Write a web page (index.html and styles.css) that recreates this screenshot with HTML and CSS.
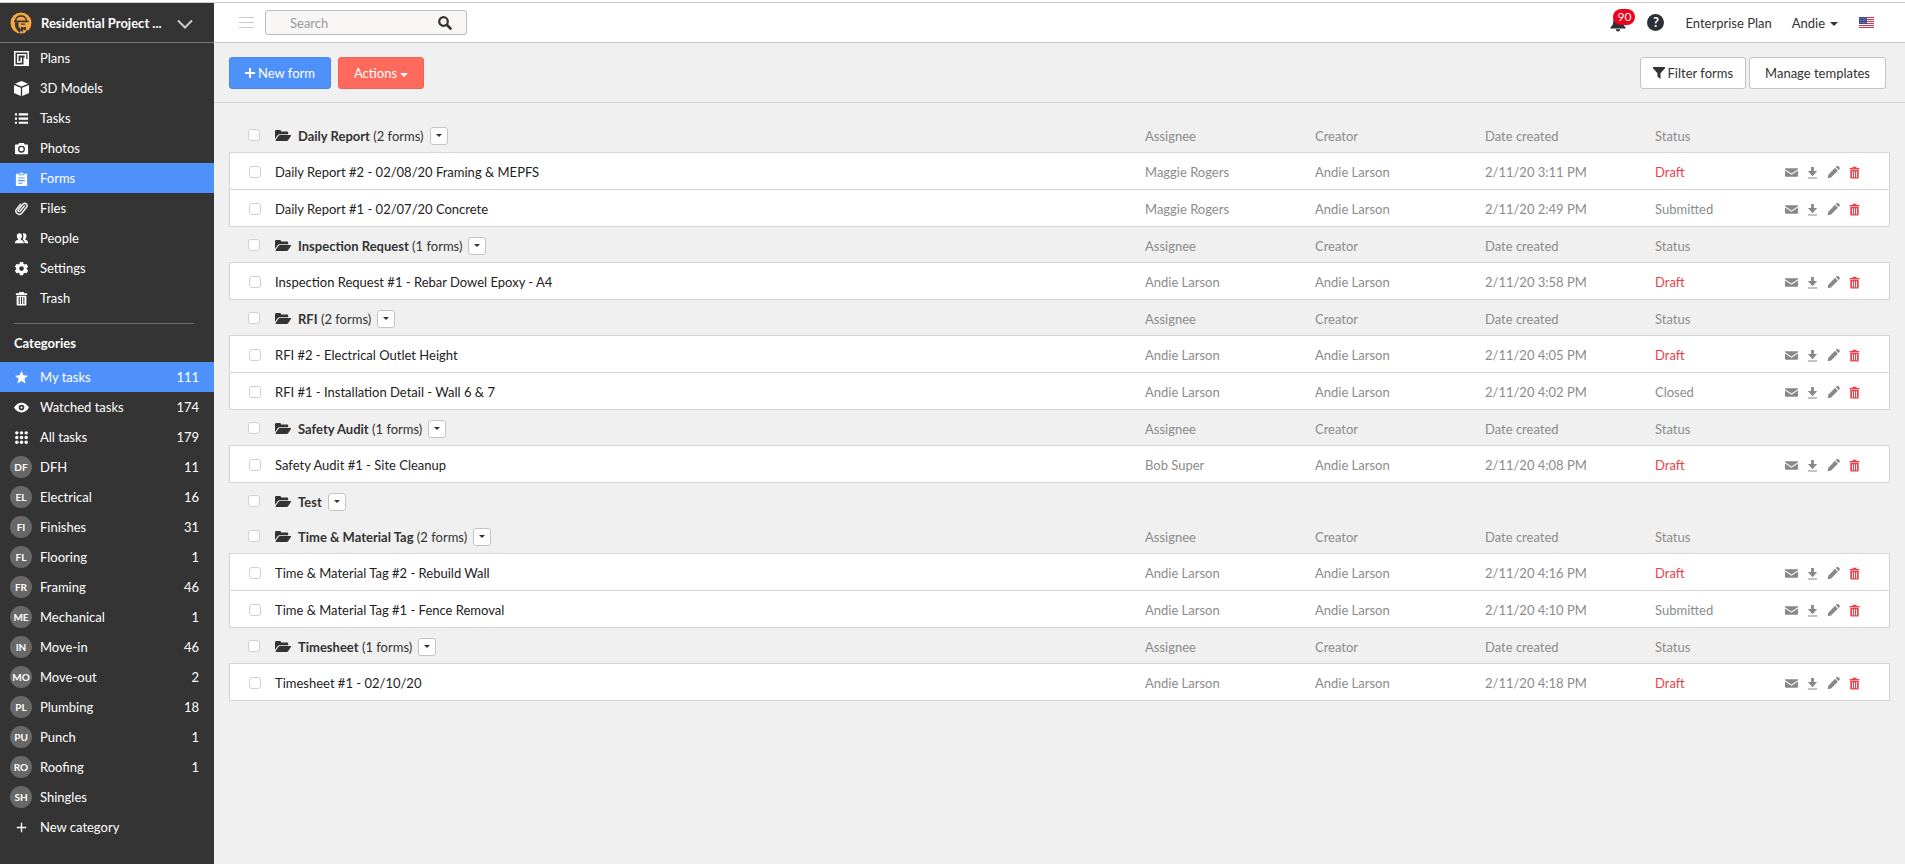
FILE: index.html
```html
<!DOCTYPE html>
<html lang="en">
<head>
    <meta charset="UTF-8">
    <meta name="viewport" content="width=device-width, initial-scale=1.0">
    <title>Forms - Residential Project</title>
    <link rel="stylesheet" href="styles.css">
</head>
<body>
    <!-- icon sprite -->
    <svg class="sprite" aria-hidden="true">
        <symbol id="i-plans" viewBox="0 0 15 15"><path fill="none" stroke="currentColor" stroke-width="1.500" d="M.75.75h13.500v13.500H.75z"/><path fill="none" stroke="currentColor" stroke-width="1.500" d="M3.800 12V3.800h7.700v3.400M3.800 11h3.400V6.500"/><path d="M9.500 6.500H12V8h2v6.500H9.500z"/></symbol>
        <symbol id="i-cube" viewBox="0 0 16 16"><path d="M8 0l7 2.800L8 5.800 1 2.800zM0 4.200l7.300 3.100V16L0 12.800zM16 4.200L8.700 7.300V16l7.300-3.200z"/></symbol>
        <symbol id="i-list" viewBox="0 0 16 16"><path d="M1 2.500h2.200v2.200H1zM5 2.500h10v2.200H5zM1 7h2.200v2.200H1zM5 7h10v2.200H5zM1 11.500h2.200v2.200H1zM5 11.500h10v2.200H5z"/></symbol>
        <symbol id="i-camera" viewBox="0 0 16 16"><path fill-rule="evenodd" d="M5.500 2h5l1 1.700H14a1 1 0 0 1 1 1V13a1 1 0 0 1-1 1H2a1 1 0 0 1-1-1V4.700a1 1 0 0 1 1-1h2.500zM8 5a3.700 3.700 0 1 0 0 7.400A3.700 3.700 0 0 0 8 5zm0 1.400a2.300 2.300 0 1 1 0 4.600 2.300 2.300 0 0 1 0-4.600z"/></symbol>
        <symbol id="i-clipboard" viewBox="0 0 16 16"><path fill-rule="evenodd" d="M2 3h3v1.500h6V3h3v13H2zm2.500 4v1.100h7V7zm0 2.700v1.100h7V9.700zm0 2.700v1.100h4.500v-1.100z"/><path opacity=".75" d="M5.500 3.800V2.200h1.200a1.400 1.400 0 0 1 2.600 0h1.200v1.600z"/></symbol>
        <symbol id="i-clip" viewBox="0 0 16 16"><path fill="none" stroke="currentColor" stroke-width="1.500" stroke-linecap="round" d="M11.200 5.200l-4.600 5.600a1.200 1.200 0 0 1-1.900-1.500l4.900-6a2.500 2.500 0 0 1 3.900 3.100l-5.300 6.600a3.500 3.500 0 0 1-5.500-4.300L7 3.500"/></symbol>
        <symbol id="i-people" viewBox="0 0 16 16"><path d="M5.800 2.500c1.700 0 2.700 1.200 2.700 2.900 0 1.400-.600 2.400-1.300 3v1c1.800.6 3.300 1.200 3.300 3.600H1c0-2.400 1.500-3 3.300-3.600v-1c-.700-.6-1.300-1.600-1.300-3 0-1.700 1-2.900 2.800-2.900z"/><path d="M9.200 3c.4-.4.900-.5 1.500-.5 1.700 0 2.600 1.200 2.600 2.900 0 1.400-.6 2.400-1.200 3v1c1.700.6 3 1.200 3 3.600h-3.700c0-1.900-.8-3.100-2.100-3.900.5-1 .7-2.200.7-3.700 0-1-.3-1.800-.8-2.400z"/></symbol>
        <symbol id="i-gear" viewBox="0 0 16 16"><path fill-rule="evenodd" d="M6.300 1h3.400l.4 2 1.400.8 1.900-.7 1.700 3-1.500 1.300v1.500l1.500 1.200-1.700 3-1.900-.7-1.400.8-.4 2H6.300l-.4-2-1.400-.8-1.900.7-1.700-3 1.500-1.200V7.400L.9 6.100l1.700-3 1.900.7L5.900 3zM8 5.600a2.500 2.500 0 1 0 0 5 2.500 2.500 0 0 0 0-5z"/></symbol>
        <symbol id="i-trash" viewBox="0 0 16 16"><path fill-rule="evenodd" d="M5.500 1h5v1.400H14v1.800H2V2.400h3.500zM2.800 5h10.400v9.500a1 1 0 0 1-1 1H3.800a1 1 0 0 1-1-1zM5 6.500v7.300h1.100V6.500zm2.500 0v7.300h1.100V6.500zm2.500 0v7.300h1.100V6.500z"/></symbol>
        <symbol id="i-star" viewBox="0 0 16 16"><path d="M8 .8l1.900 4.900 5.200.3-4 3.300 1.300 5.100L8 11.600l-4.400 2.800 1.300-5.100-4-3.300 5.200-.3z"/></symbol>
        <symbol id="i-eye" viewBox="0 0 16 16"><path fill-rule="evenodd" d="M8 2.800c3.600 0 6.200 2.200 8 5.200-1.800 3-4.400 5.200-8 5.200S1.800 11 0 8c1.800-3 4.400-5.200 8-5.200zM8 5a3 3 0 1 0 0 6 3 3 0 0 0 0-6z"/><circle cx="8" cy="8" r="1.200"/></symbol>
        <symbol id="i-grid" viewBox="0 0 16 16"><g><circle cx="3" cy="3" r="1.800"/><circle cx="8" cy="3" r="1.800"/><circle cx="13" cy="3" r="1.800"/><circle cx="3" cy="8" r="1.800"/><circle cx="8" cy="8" r="1.800"/><circle cx="13" cy="8" r="1.800"/><circle cx="3" cy="13" r="1.800"/><circle cx="8" cy="13" r="1.800"/><circle cx="13" cy="13" r="1.800"/></g></symbol>
        <symbol id="i-plus-thin" viewBox="0 0 16 16"><path d="M7.300 3h1.400v4.300H13v1.400H8.700V13H7.300V8.700H3V7.300h4.300z"/></symbol>
        <symbol id="i-plus" viewBox="0 0 10 10"><path d="M4 0h2v4h4v2H6v4H4V6H0V4h4z"/></symbol>
        <symbol id="i-caret" viewBox="0 0 8 4"><path d="M0 0h8L4 4z"/></symbol>
        <symbol id="i-search" viewBox="0 0 14 14"><circle cx="5.500" cy="5.500" r="4.300" fill="none" stroke="currentColor" stroke-width="2.200"/><path stroke="currentColor" stroke-width="2.600" stroke-linecap="round" d="M9 9l3.500 3.500"/></symbol>
        <symbol id="i-bell" viewBox="0 0 16 18"><path d="M8 1c3 0 4.600 2 4.600 5 0 3.800.9 5.700 2.900 7.200v1.300H.5v-1.300C2.500 11.700 3.400 9.800 3.400 6c0-3 1.600-5 4.600-5zM5.800 15.300h4.400a2.200 2.200 0 0 1-4.400 0z"/></symbol>
        <symbol id="i-filter" viewBox="0 0 12 12"><path d="M0 0h12v1.300L7.500 6.200V12L4.500 9.800V6.200L0 1.300z"/></symbol>
        <symbol id="i-folder" viewBox="0 0 16 12"><path d="M0 1.500C0 .6.500 0 1.400 0h3.400c.8 0 1.200.6 1.200 1.400h5.800c.9 0 1.400.5 1.400 1.400v1.400H5C3.800 4.200 3 4.700 2.400 5.600L0 9z"/><path d="M3.400 6c.4-.6.900-.9 1.700-.9h10.200c.7 0 .9.400.6 1l-2.600 4c-.4.600-.9.900-1.700.9H1.300c-.8 0-1-.4-.6-1z"/></symbol>
        <symbol id="i-mail" viewBox="0 0 14 14"><path d="M0 2.500h14v1L7 8 0 3.500z"/><path d="M0 4.800l7 4.500 7-4.500v5.700a1 1 0 0 1-1 1H1a1 1 0 0 1-1-1z"/></symbol>
        <symbol id="i-download" viewBox="0 0 14 14"><path d="M5.500 1h3v4.500H12L7 11 2 5.500h3.500zM2 12.500h10v1H2z"/></symbol>
        <symbol id="i-pencil" viewBox="0 0 14 14"><path d="M1.400 9.300L8.700 2l3 3-7.300 7.300-3.700 1zM9.500 1.200L10.600.1c.5-.4 1-.4 1.500 0l1.500 1.500c.4.500.4 1 0 1.500L12.500 4.200z"/></symbol>
    </svg>

    <div class="app">
        <aside class="sidebar">
            <a href="#" class="project">
                <svg class="logo" viewBox="0 0 22 22" aria-hidden="true">
                    <circle cx="11" cy="11" r="10.500" fill="#f5a742"/>
                    <path fill="none" stroke="#343434" stroke-width="1.400" d="M5.500 9C5.800 5.800 8 4 11 4s5.200 1.800 5.600 5"/>
                    <path fill="#343434" d="M4 8.600h14.500v1.600H4zM5 10.500h3.500v4.200l2.300 2.800-.8 3.500-2.600-2.500L5 14.500z"/>
                    <path fill="#343434" d="M11 11.500h4v1.300h-4zM10.800 14.500l2.200 1 3-.8v2.500l-1.200 1.300-1.200-1.500-1.300 3.500-1.500-2.500z"/>
                    <path fill="#343434" d="M14.800 21.800l2-4 2.700 1.400-2.500 2.800z"/>
                </svg>
                <span class="project-name">Residential Project ...</span>
                <svg class="chevron" viewBox="0 0 16 10" aria-hidden="true"><path fill="none" stroke="#ccc" stroke-width="2" d="M1 1.500l7 7 7-7"/></svg>
            </a>
            <nav>
                <ul class="menu">
                    <li><a href="#"><span class="slot"><svg class="icon"><use href="#i-plans"/></svg></span>Plans</a></li>
                    <li><a href="#"><span class="slot"><svg class="icon"><use href="#i-cube"/></svg></span>3D Models</a></li>
                    <li><a href="#"><span class="slot"><svg class="icon"><use href="#i-list"/></svg></span>Tasks</a></li>
                    <li><a href="#"><span class="slot"><svg class="icon"><use href="#i-camera"/></svg></span>Photos</a></li>
                    <li><a href="#" class="active"><span class="slot"><svg class="icon"><use href="#i-clipboard"/></svg></span>Forms</a></li>
                    <li><a href="#"><span class="slot"><svg class="icon"><use href="#i-clip"/></svg></span>Files</a></li>
                    <li><a href="#"><span class="slot"><svg class="icon"><use href="#i-people"/></svg></span>People</a></li>
                    <li><a href="#"><span class="slot"><svg class="icon"><use href="#i-gear"/></svg></span>Settings</a></li>
                    <li><a href="#"><span class="slot"><svg class="icon"><use href="#i-trash"/></svg></span>Trash</a></li>
                </ul>
                <h2>Categories</h2>
                <ul class="menu">
                    <li><a href="#" class="active"><span class="slot"><svg class="icon"><use href="#i-star"/></svg></span>My tasks<span class="count">111</span></a></li>
                    <li><a href="#"><span class="slot"><svg class="icon"><use href="#i-eye"/></svg></span>Watched tasks<span class="count">174</span></a></li>
                    <li><a href="#"><span class="slot"><svg class="icon"><use href="#i-grid"/></svg></span>All tasks<span class="count">179</span></a></li>
                    <li><a href="#"><span class="slot avatar">DF</span>DFH<span class="count">11</span></a></li>
                    <li><a href="#"><span class="slot avatar">EL</span>Electrical<span class="count">16</span></a></li>
                    <li><a href="#"><span class="slot avatar">FI</span>Finishes<span class="count">31</span></a></li>
                    <li><a href="#"><span class="slot avatar">FL</span>Flooring<span class="count">1</span></a></li>
                    <li><a href="#"><span class="slot avatar">FR</span>Framing<span class="count">46</span></a></li>
                    <li><a href="#"><span class="slot avatar">ME</span>Mechanical<span class="count">1</span></a></li>
                    <li><a href="#"><span class="slot avatar">IN</span>Move-in<span class="count">46</span></a></li>
                    <li><a href="#"><span class="slot avatar">MO</span>Move-out<span class="count">2</span></a></li>
                    <li><a href="#"><span class="slot avatar">PL</span>Plumbing<span class="count">18</span></a></li>
                    <li><a href="#"><span class="slot avatar">PU</span>Punch<span class="count">1</span></a></li>
                    <li><a href="#"><span class="slot avatar">RO</span>Roofing<span class="count">1</span></a></li>
                    <li><a href="#"><span class="slot avatar">SH</span>Shingles</a></li>
                    <li><a href="#"><span class="slot"><svg class="icon"><use href="#i-plus-thin"/></svg></span>New category</a></li>
                </ul>
            </nav>
        </aside>

        <main>
            <header class="topbar">
                <button class="toggle" type="button" aria-label="Toggle menu"><span></span><span></span><span></span></button>
                <form class="search">
                    <input type="text" placeholder="Search" aria-label="Search">
                    <button type="button" aria-label="Search"><svg><use href="#i-search"/></svg></button>
                </form>
                <div class="account">
                    <button class="bell" type="button" aria-label="Notifications"><svg><use href="#i-bell"/></svg><span class="badge">90</span></button>
                    <button class="help" type="button" aria-label="Help">?</button>
                    <a href="#" class="plan">Enterprise Plan</a>
                    <a href="#" class="user">Andie<svg class="caret"><use href="#i-caret"/></svg></a>
                    <a href="#" class="flag" aria-label="Language">
                        <svg viewBox="0 0 15 12"><path fill="#fff" d="M0 0h15v12H0z"/><path stroke="#d8324a" stroke-width="1" d="M0 .5h15M0 2.500h15M0 4.500h15M0 6.500h15M0 8.500h15M0 10.500h15"/><path fill="#3c4b8f" d="M0 0h8v7H0z"/><path stroke="#a9b2d6" stroke-width=".6" stroke-dasharray=".8 .8" d="M.8 1.500h6.600M.8 3.500h6.600M.8 5.500h6.600"/></svg>
                    </a>
                </div>
            </header>

            <div class="toolbar">
                <button class="btn btn-primary" type="button"><svg class="plus"><use href="#i-plus"/></svg>New form</button>
                <button class="btn btn-danger" type="button">Actions<svg class="caret"><use href="#i-caret"/></svg></button>
                <div class="toolbar-right">
                    <button class="btn btn-filter" type="button"><svg class="funnel"><use href="#i-filter"/></svg>Filter forms</button>
                    <button class="btn" type="button">Manage templates</button>
                </div>
            </div>

            <div class="groups">
                <table class="forms">
                    <colgroup><col class="c-check"><col><col class="c-info"><col class="c-info"><col class="c-info"><col class="c-status"><col class="c-actions"></colgroup>
                    <thead>
                        <tr>
                            <th><input type="checkbox" aria-label="Select Daily Report"></th>
                            <th><div class="group-title"><svg class="folder"><use href="#i-folder"/></svg><span><b>Daily Report</b> (2 forms)</span><button type="button" aria-label="Daily Report menu"><svg><use href="#i-caret"/></svg></button></div></th>
                            <th>Assignee</th><th>Creator</th><th>Date created</th><th>Status</th><th></th>
                        </tr>
                    </thead>
                    <tbody>
                        <tr>
                            <td><input type="checkbox" aria-label="Select Daily Report #2"></td>
                            <td><a href="#">Daily Report #2 - 02/08/20 Framing &amp; MEPFS</a></td>
                            <td>Maggie Rogers</td><td>Andie Larson</td><td>2/11/20 3:11 PM</td><td class="draft">Draft</td>
                            <td><div class="actions"><button type="button" aria-label="Email"><svg><use href="#i-mail"/></svg></button><button type="button" aria-label="Download"><svg><use href="#i-download"/></svg></button><button type="button" aria-label="Edit"><svg><use href="#i-pencil"/></svg></button><button type="button" class="delete" aria-label="Delete"><svg><use href="#i-trash"/></svg></button></div></td>
                        </tr>
                        <tr>
                            <td><input type="checkbox" aria-label="Select Daily Report #1"></td>
                            <td><a href="#">Daily Report #1 - 02/07/20 Concrete</a></td>
                            <td>Maggie Rogers</td><td>Andie Larson</td><td>2/11/20 2:49 PM</td><td>Submitted</td>
                            <td><div class="actions"><button type="button" aria-label="Email"><svg><use href="#i-mail"/></svg></button><button type="button" aria-label="Download"><svg><use href="#i-download"/></svg></button><button type="button" aria-label="Edit"><svg><use href="#i-pencil"/></svg></button><button type="button" class="delete" aria-label="Delete"><svg><use href="#i-trash"/></svg></button></div></td>
                        </tr>
                    </tbody>
                </table>

                <table class="forms">
                    <colgroup><col class="c-check"><col><col class="c-info"><col class="c-info"><col class="c-info"><col class="c-status"><col class="c-actions"></colgroup>
                    <thead>
                        <tr>
                            <th><input type="checkbox" aria-label="Select Inspection Request"></th>
                            <th><div class="group-title"><svg class="folder"><use href="#i-folder"/></svg><span><b>Inspection Request</b> (1 forms)</span><button type="button" aria-label="Inspection Request menu"><svg><use href="#i-caret"/></svg></button></div></th>
                            <th>Assignee</th><th>Creator</th><th>Date created</th><th>Status</th><th></th>
                        </tr>
                    </thead>
                    <tbody>
                        <tr>
                            <td><input type="checkbox" aria-label="Select Inspection Request #1"></td>
                            <td><a href="#">Inspection Request #1 - Rebar Dowel Epoxy - A4</a></td>
                            <td>Andie Larson</td><td>Andie Larson</td><td>2/11/20 3:58 PM</td><td class="draft">Draft</td>
                            <td><div class="actions"><button type="button" aria-label="Email"><svg><use href="#i-mail"/></svg></button><button type="button" aria-label="Download"><svg><use href="#i-download"/></svg></button><button type="button" aria-label="Edit"><svg><use href="#i-pencil"/></svg></button><button type="button" class="delete" aria-label="Delete"><svg><use href="#i-trash"/></svg></button></div></td>
                        </tr>
                    </tbody>
                </table>

                <table class="forms">
                    <colgroup><col class="c-check"><col><col class="c-info"><col class="c-info"><col class="c-info"><col class="c-status"><col class="c-actions"></colgroup>
                    <thead>
                        <tr>
                            <th><input type="checkbox" aria-label="Select RFI"></th>
                            <th><div class="group-title"><svg class="folder"><use href="#i-folder"/></svg><span><b>RFI</b> (2 forms)</span><button type="button" aria-label="RFI menu"><svg><use href="#i-caret"/></svg></button></div></th>
                            <th>Assignee</th><th>Creator</th><th>Date created</th><th>Status</th><th></th>
                        </tr>
                    </thead>
                    <tbody>
                        <tr>
                            <td><input type="checkbox" aria-label="Select RFI #2"></td>
                            <td><a href="#">RFI #2 - Electrical Outlet Height</a></td>
                            <td>Andie Larson</td><td>Andie Larson</td><td>2/11/20 4:05 PM</td><td class="draft">Draft</td>
                            <td><div class="actions"><button type="button" aria-label="Email"><svg><use href="#i-mail"/></svg></button><button type="button" aria-label="Download"><svg><use href="#i-download"/></svg></button><button type="button" aria-label="Edit"><svg><use href="#i-pencil"/></svg></button><button type="button" class="delete" aria-label="Delete"><svg><use href="#i-trash"/></svg></button></div></td>
                        </tr>
                        <tr>
                            <td><input type="checkbox" aria-label="Select RFI #1"></td>
                            <td><a href="#">RFI #1 - Installation Detail - Wall 6 &amp; 7</a></td>
                            <td>Andie Larson</td><td>Andie Larson</td><td>2/11/20 4:02 PM</td><td>Closed</td>
                            <td><div class="actions"><button type="button" aria-label="Email"><svg><use href="#i-mail"/></svg></button><button type="button" aria-label="Download"><svg><use href="#i-download"/></svg></button><button type="button" aria-label="Edit"><svg><use href="#i-pencil"/></svg></button><button type="button" class="delete" aria-label="Delete"><svg><use href="#i-trash"/></svg></button></div></td>
                        </tr>
                    </tbody>
                </table>

                <table class="forms">
                    <colgroup><col class="c-check"><col><col class="c-info"><col class="c-info"><col class="c-info"><col class="c-status"><col class="c-actions"></colgroup>
                    <thead>
                        <tr>
                            <th><input type="checkbox" aria-label="Select Safety Audit"></th>
                            <th><div class="group-title"><svg class="folder"><use href="#i-folder"/></svg><span><b>Safety Audit</b> (1 forms)</span><button type="button" aria-label="Safety Audit menu"><svg><use href="#i-caret"/></svg></button></div></th>
                            <th>Assignee</th><th>Creator</th><th>Date created</th><th>Status</th><th></th>
                        </tr>
                    </thead>
                    <tbody>
                        <tr>
                            <td><input type="checkbox" aria-label="Select Safety Audit #1"></td>
                            <td><a href="#">Safety Audit #1 - Site Cleanup</a></td>
                            <td>Bob Super</td><td>Andie Larson</td><td>2/11/20 4:08 PM</td><td class="draft">Draft</td>
                            <td><div class="actions"><button type="button" aria-label="Email"><svg><use href="#i-mail"/></svg></button><button type="button" aria-label="Download"><svg><use href="#i-download"/></svg></button><button type="button" aria-label="Edit"><svg><use href="#i-pencil"/></svg></button><button type="button" class="delete" aria-label="Delete"><svg><use href="#i-trash"/></svg></button></div></td>
                        </tr>
                    </tbody>
                </table>

                <!-- empty folder -->
                <table class="forms">
                    <colgroup><col class="c-check"><col></colgroup>
                    <thead>
                        <tr>
                            <th><input type="checkbox" aria-label="Select Test"></th>
                            <th><div class="group-title"><svg class="folder"><use href="#i-folder"/></svg><span><b>Test</b></span><button type="button" aria-label="Test menu"><svg><use href="#i-caret"/></svg></button></div></th>
                        </tr>
                    </thead>
                </table>

                <table class="forms">
                    <colgroup><col class="c-check"><col><col class="c-info"><col class="c-info"><col class="c-info"><col class="c-status"><col class="c-actions"></colgroup>
                    <thead>
                        <tr>
                            <th><input type="checkbox" aria-label="Select Time &amp; Material Tag"></th>
                            <th><div class="group-title"><svg class="folder"><use href="#i-folder"/></svg><span><b>Time &amp; Material Tag</b> (2 forms)</span><button type="button" aria-label="Time &amp; Material Tag menu"><svg><use href="#i-caret"/></svg></button></div></th>
                            <th>Assignee</th><th>Creator</th><th>Date created</th><th>Status</th><th></th>
                        </tr>
                    </thead>
                    <tbody>
                        <tr>
                            <td><input type="checkbox" aria-label="Select Time &amp; Material Tag #2"></td>
                            <td><a href="#">Time &amp; Material Tag #2 - Rebuild Wall</a></td>
                            <td>Andie Larson</td><td>Andie Larson</td><td>2/11/20 4:16 PM</td><td class="draft">Draft</td>
                            <td><div class="actions"><button type="button" aria-label="Email"><svg><use href="#i-mail"/></svg></button><button type="button" aria-label="Download"><svg><use href="#i-download"/></svg></button><button type="button" aria-label="Edit"><svg><use href="#i-pencil"/></svg></button><button type="button" class="delete" aria-label="Delete"><svg><use href="#i-trash"/></svg></button></div></td>
                        </tr>
                        <tr>
                            <td><input type="checkbox" aria-label="Select Time &amp; Material Tag #1"></td>
                            <td><a href="#">Time &amp; Material Tag #1 - Fence Removal</a></td>
                            <td>Andie Larson</td><td>Andie Larson</td><td>2/11/20 4:10 PM</td><td>Submitted</td>
                            <td><div class="actions"><button type="button" aria-label="Email"><svg><use href="#i-mail"/></svg></button><button type="button" aria-label="Download"><svg><use href="#i-download"/></svg></button><button type="button" aria-label="Edit"><svg><use href="#i-pencil"/></svg></button><button type="button" class="delete" aria-label="Delete"><svg><use href="#i-trash"/></svg></button></div></td>
                        </tr>
                    </tbody>
                </table>

                <table class="forms">
                    <colgroup><col class="c-check"><col><col class="c-info"><col class="c-info"><col class="c-info"><col class="c-status"><col class="c-actions"></colgroup>
                    <thead>
                        <tr>
                            <th><input type="checkbox" aria-label="Select Timesheet"></th>
                            <th><div class="group-title"><svg class="folder"><use href="#i-folder"/></svg><span><b>Timesheet</b> (1 forms)</span><button type="button" aria-label="Timesheet menu"><svg><use href="#i-caret"/></svg></button></div></th>
                            <th>Assignee</th><th>Creator</th><th>Date created</th><th>Status</th><th></th>
                        </tr>
                    </thead>
                    <tbody>
                        <tr>
                            <td><input type="checkbox" aria-label="Select Timesheet #1"></td>
                            <td><a href="#">Timesheet #1 - 02/10/20</a></td>
                            <td>Andie Larson</td><td>Andie Larson</td><td>2/11/20 4:18 PM</td><td class="draft">Draft</td>
                            <td><div class="actions"><button type="button" aria-label="Email"><svg><use href="#i-mail"/></svg></button><button type="button" aria-label="Download"><svg><use href="#i-download"/></svg></button><button type="button" aria-label="Edit"><svg><use href="#i-pencil"/></svg></button><button type="button" class="delete" aria-label="Delete"><svg><use href="#i-trash"/></svg></button></div></td>
                        </tr>
                    </tbody>
                </table>
            </div>
        </main>
    </div>
</body>
</html>
```
FILE: styles.css
```css
* {
    box-sizing: border-box;
}
body {
    margin: 0;
    padding-top: 2px;
    background-color: #fff;
    color: #333;
    font-family: Lato, sans-serif;
    font-size: 13px;
    line-height: 20px;
}
a {
    color: inherit;
    text-decoration: none;
}
button, input {
    font: inherit;
    color: inherit;
}
button {
    display: flex;
    align-items: center;
    justify-content: center;
    padding: 0;
    border: none;
    background: none;
    cursor: pointer;
}
svg {
    display: block;
    flex: none;
    fill: currentColor;
}
.sprite {
    display: none;
}
.app {
    display: flex;
    min-height: calc(100vh - 2px);
    border-top: 1px solid #ccc;
}

/* sidebar */
.sidebar {
    flex: none;
    width: 214px;
    background-color: #343434;
    color: #fff;
}
.project {
    display: flex;
    align-items: center;
    height: 40px;
    padding: 0 21px 0 10px;
    border-bottom: 1px solid #777;
    font-weight: bold;
}
.logo {
    width: 22px;
    height: 22px;
    margin-right: 9px;
}
.project-name {
    flex: 1;
    white-space: nowrap;
}
.chevron {
    width: 16px;
    height: 10px;
    margin-top: 2px;
}
.menu {
    margin: 0;
    padding: 0;
    list-style: none;
}
.menu a {
    display: flex;
    align-items: center;
    height: 30px;
    padding: 0 15px 0 10px;
}
.menu a.active {
    background-color: #4f91fb;
}
.slot {
    display: flex;
    align-items: center;
    justify-content: center;
    width: 22px;
    height: 22px;
    margin-right: 8px;
}
.icon {
    width: 15px;
    height: 15px;
}
.avatar {
    border-radius: 50%;
    background-color: #686868;
    font-size: 10px;
    font-weight: bold;
}
.count {
    margin-left: auto;
}
.sidebar h2 {
    margin: 10px 20px 0 14px;
    padding: 9px 0;
    border-top: 1px solid #6a6a6a;
    font-size: 13px;
    line-height: 20px;
}

/* top bar */
main {
    flex: 1;
    min-width: 0;
    background-color: #f0f0f0;
}
.topbar {
    display: flex;
    align-items: center;
    height: 40px;
    padding: 0 31px 0 25px;
    border-bottom: 1px solid #ccc;
    background-color: #fff;
}
.toggle {
    flex-direction: column;
    gap: 4px;
    margin-right: 11px;
}
.toggle span {
    width: 15px;
    height: 1px;
    background-color: #ccc;
}
.search {
    display: flex;
    align-items: center;
    width: 202px;
    height: 25px;
    padding: 0 14px 0 24px;
    border: 1px solid #bbb;
    border-radius: 3px;
    background-color: #f8f7f6;
}
.search input {
    flex: 1;
    min-width: 0;
    height: 20px;
    padding: 0;
    border: none;
    outline: none;
    background: none;
}
.search input::placeholder {
    color: #999;
}
.search svg {
    width: 14px;
    height: 14px;
}
.account {
    display: flex;
    align-items: center;
    margin-left: auto;
}
.bell {
    position: relative;
    margin-right: 21px;
    color: #2b2f36;
}
.bell svg {
    width: 16px;
    height: 18px;
}
.badge {
    position: absolute;
    top: -5px;
    left: 3px;
    width: 22px;
    border-radius: 8px;
    background-color: #f0001c;
    color: #fff;
    font-size: 12px;
    line-height: 16px;
}
.help {
    width: 17px;
    height: 17px;
    margin-right: 21px;
    border-radius: 50%;
    background-color: #2b2f36;
    color: #fff;
    font-weight: bold;
    line-height: 17px;
}
.plan {
    margin-right: 20px;
}
.user {
    display: flex;
    align-items: center;
    gap: 5px;
    margin-right: 21px;
}
.caret {
    width: 8px;
    height: 4px;
    margin-top: 3px;
}
.flag svg {
    width: 15px;
    height: 12px;
}

/* toolbar */
.toolbar {
    display: flex;
    align-items: center;
    gap: 7px;
    padding: 14px 19px 13px 15px;
    border-bottom: 1px solid #d5d5d5;
}
.toolbar-right {
    display: flex;
    gap: 3px;
    margin-left: auto;
}
.btn {
    gap: 3px;
    height: 32px;
    padding: 0 15px;
    border: 1px solid #c4c4c4;
    border-radius: 3px;
    background-color: #fff;
}
.btn-primary {
    border-color: #4788f0;
    background-color: #4f91fb;
    color: #fff;
}
.btn-danger {
    border-color: #f0625a;
    background-color: #ff6a5c;
    color: #fff;
}
.btn-filter {
    padding: 0 12px;
}
.plus {
    width: 10px;
    height: 10px;
}
.funnel {
    width: 12px;
    height: 12px;
}

/* form groups */
.groups {
    padding: 14px 15px;
}
.forms {
    width: 100%;
    table-layout: fixed;
    border-collapse: separate;
    border-spacing: 0;
    color: #8c8c8c;
}
.c-check {
    width: 46px;
}
.c-info {
    width: 170px;
}
.c-status {
    width: 126px;
}
.c-actions {
    width: 109px;
}
.forms th, .forms td {
    padding: 2px 0 0;
    text-align: left;
    vertical-align: middle;
}
.forms th {
    height: 35px;
    font-weight: normal;
}
.forms th:first-child {
    padding-top: 0;
}
.forms td {
    height: 37px;
    border-bottom: 1px solid #d5d5d5;
    background-color: #fff;
}
.forms tbody tr:first-child td {
    height: 38px;
    border-top: 1px solid #d5d5d5;
}
.forms td:first-child {
    border-left: 1px solid #d5d5d5;
}
.forms td:last-child {
    border-right: 1px solid #d5d5d5;
}
.forms td a {
    color: #222;
}
.forms .draft {
    color: #e8434b;
}
.forms input {
    display: block;
    appearance: none;
    width: 12px;
    height: 12px;
    margin: 0 0 0 19px;
    border: 1px solid #d0d0d0;
    border-radius: 3px;
    background-color: #fff;
}
.group-title {
    display: flex;
    align-items: center;
    color: #333;
}
.folder {
    width: 16px;
    height: 12px;
    margin-right: 7px;
}
.group-title button {
    width: 18px;
    height: 18px;
    margin-left: 6px;
    border: 1px solid #c4c4c4;
    border-radius: 3px;
    background-color: #fff;
}
.group-title button svg {
    width: 6px;
    height: 3px;
}
.actions {
    display: flex;
    color: #888;
}
.actions button {
    width: 21px;
    height: 20px;
}
.actions svg {
    width: 13px;
    height: 13px;
}
.actions .delete {
    color: #e8434b;
}
```
